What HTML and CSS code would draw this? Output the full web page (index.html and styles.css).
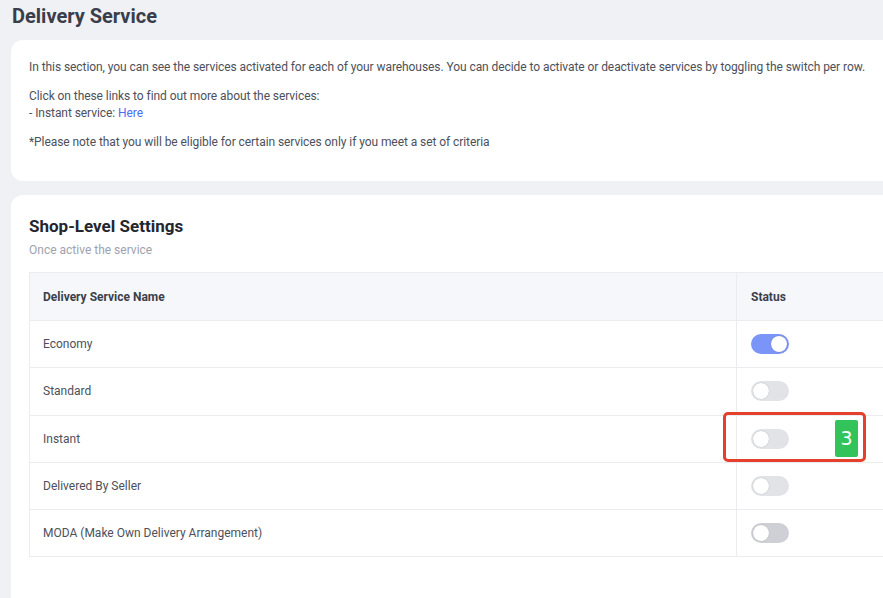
FILE: index.html
```html
<!DOCTYPE html>
<html lang="en">
<head>
  <meta charset="UTF-8" />
  <title>Delivery Service</title>
  <link rel="stylesheet" href="styles.css">
</head>
<body>
  <div class="page">
    <h1 class="page-title">Delivery Service</h1>

    <!-- Intro card -->
    <div class="card intro">
      <p>In this section, you can see the services activated for each of your warehouses. You can decide to activate or deactivate services by toggling the switch per row.</p>
      <p>Click on these links to find out more about the services:<br>- Instant service: <a href="#">Here</a></p>
      <p>*Please note that you will be eligible for certain services only if you meet a set of criteria</p>
    </div>

    <!-- Shop level settings -->
    <div class="card settings">
      <h2>Shop-Level Settings</h2>
      <div class="subtitle">Once active the service</div>

      <table class="service-table">
        <thead>
          <tr>
            <th class="name-col">Delivery Service Name</th>
            <th class="status-col">Status</th>
          </tr>
        </thead>
        <tbody>
          <tr>
            <td>Economy</td>
            <td class="status-col"><span class="switch on"></span></td>
          </tr>
          <tr>
            <td>Standard</td>
            <td class="status-col"><span class="switch"></span></td>
          </tr>
          <tr>
            <td>Instant</td>
            <td class="status-col">
              <span class="switch"></span>
              <div class="marker"><span class="badge">3</span></div>
            </td>
          </tr>
          <tr>
            <td>Delivered By Seller</td>
            <td class="status-col"><span class="switch"></span></td>
          </tr>
          <tr>
            <td>MODA (Make Own Delivery Arrangement)</td>
            <td class="status-col"><span class="switch hover"></span></td>
          </tr>
        </tbody>
      </table>
    </div>
  </div>
</body>
</html>
```

FILE: styles.css
```css
body {
  margin: 0;
  background: #f0f1f5;
  font-family: Roboto, "Liberation Sans", sans-serif;
  color: #4a4d57;
  overflow: hidden;
}
.page {
  width: 901px;
  padding: 0 0 0 11px;
}
.page-title {
  margin: 0;
  padding: 3px 0 0 1px;
  height: 40px;
  box-sizing: border-box;
  font-size: 20px;
  font-weight: 700;
  color: #3a3e4a;
  line-height: 26px;
}
.card {
  background: #fff;
  border-radius: 12px;
}
.intro {
  height: 141px;
  padding: 19px 18px 0;
  box-sizing: border-box;
  font-size: 12px;
  line-height: 17px;
  letter-spacing: -0.07px;
  color: #4d505a;
}
.intro p {
  margin: 0 0 12px;
}
.intro a {
  color: #4d6cf2;
  text-decoration: none;
}
.settings {
  margin-top: 14px;
  padding: 20px 18px 60px;
}
.settings h2 {
  margin: 0;
  font-size: 17px;
  font-weight: 700;
  color: #24262d;
  line-height: 22px;
}
.subtitle {
  margin-top: 5px;
  font-size: 12px;
  color: #9ea2af;
  line-height: 16px;
}
.service-table {
  margin-top: 14px;
  width: 100%;
  border-collapse: collapse;
  font-size: 12px;
  border: 1px solid #ebecf0;
}
.service-table th {
  background: #f6f7fa;
  text-align: left;
  font-weight: 700;
  color: #3c3f4a;
  height: 47px;
  padding: 0 13px;
  border-bottom: 1px solid #ebecf0;
}
.service-table td {
  height: 46.3px;
  padding: 0 13px;
  border-bottom: 1px solid #ebecf0;
  color: #4d505a;
}
.service-table .status-col {
  width: 129px;
  padding-left: 14px;
  border-left: 1px solid #ebecf0;
  position: relative;
}
.switch {
  display: inline-block;
  vertical-align: middle;
  position: relative;
  width: 38px;
  height: 20px;
  border-radius: 10px;
  background: #e2e3e6;
}
.switch::after {
  content: "";
  position: absolute;
  top: 2px;
  left: 2px;
  width: 16px;
  height: 16px;
  border-radius: 50%;
  background: #fff;
  box-shadow: 0 0 1px rgba(0, 0, 0, 0.3);
}
.switch.on {
  background: #7b94f7;
}
.switch.on::after {
  left: 20px;
}
.switch.hover {
  background: #cfd0d5;
}
.marker {
  position: absolute;
  left: -14px;
  top: -4px;
  width: 137px;
  height: 44px;
  border: 3px solid #e5402b;
  border-radius: 5px;
}
.badge {
  position: absolute;
  right: 5px;
  top: 5px;
  width: 23px;
  height: 37px;
  background: #32c45a;
  border-radius: 2px;
  color: #fff;
  font-family: "DejaVu Sans", sans-serif;
  font-size: 19px;
  line-height: 37px;
  text-align: center;
}
```
